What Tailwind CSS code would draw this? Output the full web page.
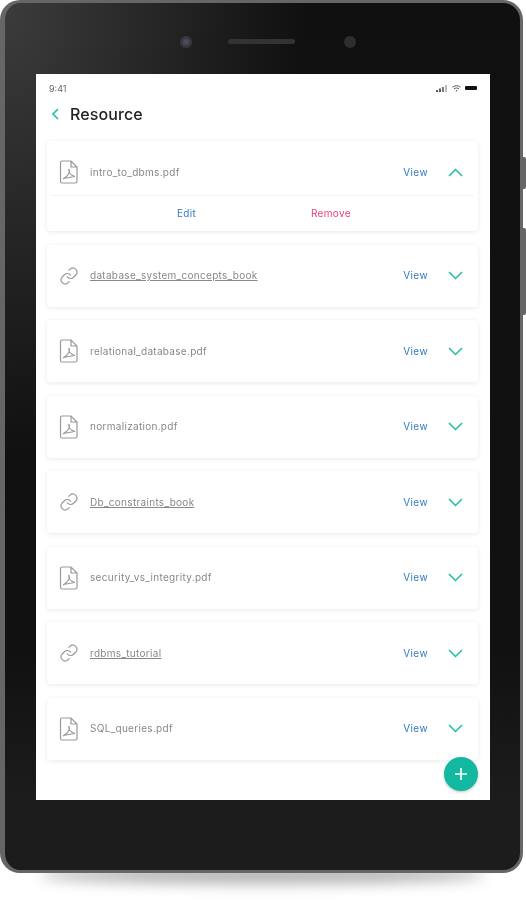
<!DOCTYPE html>
<html lang="en">
<head>
    <meta charset="UTF-8">
    <meta name="viewport" content="width=device-width, initial-scale=1.0">
    <title>Resource</title>
    <script src="https://cdn.jsdelivr.net/npm/@tailwindcss/browser@4"></script>
</head>
<body class="bg-white font-['Inter',sans-serif] overflow-hidden">
    <div class="relative w-[526px] h-[900px] overflow-hidden">
        <!-- Shadow under the device -->
        <div class="absolute left-[40px] top-[866px] w-[445px] h-[18px] rounded-[50%] bg-black/30 blur-[7px]"></div>

        <!-- Side buttons -->
        <div class="absolute left-[518px] top-[157px] w-[8px] h-[32px] rounded-r-[2px] bg-[#666]"></div>
        <div class="absolute left-[518px] top-[228px] w-[8px] h-[87px] rounded-r-[2px] bg-[#666]"></div>

        <!-- Device -->
        <div class="relative w-[523px] h-[873px] rounded-[20px] border-[3px] border-l-[5px] border-[#666] bg-[radial-gradient(ellipse_300px_450px_at_0_0,#3c3c3c_0%,transparent_100%),linear-gradient(180deg,#101010_0%,#111_75%,#1c1c1c_92%)] pt-[71px] pl-[31px]">
            <!-- Camera and speaker -->
            <div class="absolute left-[175px] top-[33px] w-[12px] h-[12px] rounded-full bg-[#4a4a68] border-[3px] border-[#3a3a3a]"></div>
            <div class="absolute left-[223px] top-[36px] w-[67px] h-[5px] rounded-full bg-[#333] blur-[0.5px]"></div>
            <div class="absolute left-[339px] top-[33px] w-[12px] h-[12px] rounded-full bg-[#2e2e2e]"></div>

            <!-- Screen -->
            <div class="relative w-[454px] h-[726px] bg-white overflow-hidden">
                <div class="blur-[0.5px]">
                    <div class="flex justify-between items-center px-[13px] pt-[8px] h-[20px]">
                        <span class="text-[9px] leading-none text-[#666]">9:41</span>
                        <div class="flex items-center gap-[4px]">
                            <svg width="12" height="7" viewBox="0 0 12 7" fill="#555"><rect x="0" y="5" width="2" height="2"/><rect x="3" y="3.5" width="2" height="3.5"/><rect x="6" y="2" width="2" height="5" fill="#777"/><rect x="9" y="0" width="2" height="7" fill="#bbb"/></svg>
                            <svg width="9" height="7" viewBox="0 0 9 7" fill="none" stroke="#555" stroke-width="1"><path d="M.5 2.2c2.300-2 5.700-2 8 0M2 3.900c1.500-1.200 3.500-1.200 5 0"/><circle cx="4.500" cy="5.800" r=".8" fill="#555" stroke="none"/></svg>
                            <div class="w-[12px] h-[4px] rounded-[1px] bg-[#111]"></div>
                        </div>
                    </div>

                    <div class="flex items-center h-[30px] mt-[5px] pl-[15px]">
                        <svg width="8" height="12" viewBox="0 0 8 12" fill="none" stroke="#1fbfa5" stroke-width="1.600"><path d="M7 1 2 6l5 5"/></svg>
                        <h1 class="ml-[11px] text-[16px] font-medium tracking-[0.1px] text-[#222]">Resource</h1>
                    </div>

                    <div class="flex flex-col gap-[13.500px] mx-[11px] mt-[12px] w-[431px]">
                        <!-- Expanded card -->
                        <div class="h-[90px] rounded-[4px] bg-white shadow-[0_1px_5px_rgba(0,0,0,0.09)]">
                            <div class="flex items-center h-[54px] pt-[8px] pl-[12px] pr-[15px]">
                                <svg class="w-[20px] h-[24px] shrink-0" viewBox="0 0 20 24" fill="none" stroke="#999" stroke-width="1.200"><path d="M3 1h9l6 6v14.500a1.500 1.500 0 0 1-1.500 1.500h-13.500a1.500 1.500 0 0 1-1.500-1.500V2.500A1.500 1.500 0 0 1 3 1zM12 1v6h6"/><path d="M10 9c-1 3 1.500 6 6 7.500M10 9c1 3-1 7-6 10M4.500 18.500 15.500 16.500"/></svg>
                                <span class="ml-[11px] text-[10px] tracking-[0.3px] text-[#888]">intro_to_dbms.pdf</span>
                                <span class="ml-auto text-[10px] tracking-[0.4px] text-[#2f7cc4]">View</span>
                                <svg class="ml-[20px] w-[15px] h-[9px]" viewBox="0 0 15 9" fill="none" stroke="#1fbf9f" stroke-width="1.500"><path d="M1 8l6.500-6.500L14 8"/></svg>
                            </div>
                            <div class="flex h-[36px] mx-[4px] border-t border-[#f3f3f3] items-center text-[10px] tracking-[0.3px]">
                                <span class="ml-[126px] text-[#2f7cc4]">Edit</span>
                                <span class="ml-[115px] text-[#ec3f76]">Remove</span>
                            </div>
                        </div>

                        <!-- Collapsed cards -->
                        <div id="rows" class="contents"></div>
                    </div>
                </div>

                <button class="absolute right-[12px] bottom-[9px] flex items-center justify-center w-[34px] h-[34px] rounded-full bg-[#12b8a0] shadow-[0_1px_3px_rgba(0,0,0,0.25)]">
                    <svg width="14" height="14" viewBox="0 0 14 14" stroke="#fff" stroke-width="1.600"><path d="M7 1v12M1 7h12"/></svg>
                </button>
            </div>
        </div>
    </div>

    <script>
        const resources = [
            { name: 'database_system_concepts_book', link: true },
            { name: 'relational_database.pdf' },
            { name: 'normalization.pdf' },
            { name: 'Db_constraints_book', link: true },
            { name: 'security_vs_integrity.pdf' },
            { name: 'rdbms_tutorial', link: true },
            { name: 'SQL_queries.pdf' }
        ];

        const pdfIcon = `<svg class="w-[20px] h-[24px] shrink-0" viewBox="0 0 20 24" fill="none" stroke="#999" stroke-width="1.200"><path d="M3 1h9l6 6v14.500a1.500 1.500 0 0 1-1.500 1.500h-13.500a1.500 1.500 0 0 1-1.500-1.500V2.500A1.500 1.500 0 0 1 3 1zM12 1v6h6"/><path d="M10 9c-1 3 1.500 6 6 7.500M10 9c1 3-1 7-6 10M4.500 18.500 15.500 16.500"/></svg>`;
        const linkIcon = `<svg class="w-[20px] h-[20px] shrink-0" viewBox="0 0 24 24" fill="none" stroke="#999" stroke-width="1.400" stroke-linecap="round"><path d="M10 13a5 5 0 0 0 7.500.5l3-3a5 5 0 0 0-7-7l-1.700 1.700"/><path d="M14 11a5 5 0 0 0-7.500-.5l-3 3a5 5 0 0 0 7 7l1.700-1.700"/></svg>`;

        const rows = document.getElementById('rows');
        resources.forEach((item) => {
            const card = document.createElement('div');
            card.className = 'flex items-center h-[62px] pl-[12px] pr-[15px] rounded-[4px] bg-white shadow-[0_1px_5px_rgba(0,0,0,0.09)]';
            card.innerHTML = `
                ${item.link ? linkIcon : pdfIcon}
                <span class="ml-[11px] text-[10px] tracking-[0.3px] text-[#888] ${item.link ? 'underline' : ''}">${item.name}</span>
                <span class="ml-auto text-[10px] tracking-[0.4px] text-[#2f7cc4]">View</span>
                <svg class="ml-[20px] w-[15px] h-[9px]" viewBox="0 0 15 9" fill="none" stroke="#1fbf9f" stroke-width="1.500"><path d="M1 1l6.500 6.500L14 1"/></svg>
            `;
            rows.appendChild(card);
        });
    </script>
</body>
</html>
